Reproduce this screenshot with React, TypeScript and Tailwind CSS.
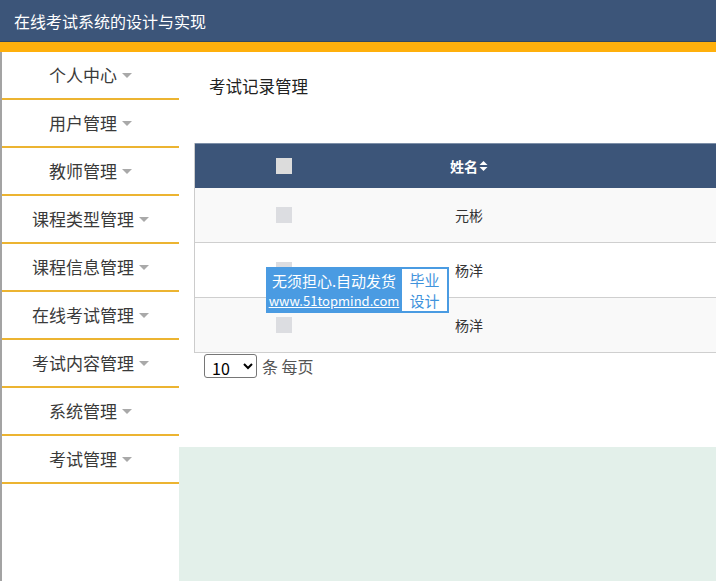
import React from 'react';

const menu = [
  '个人中心',
  '用户管理',
  '教师管理',
  '课程类型管理',
  '课程信息管理',
  '在线考试管理',
  '考试内容管理',
  '系统管理',
  '考试管理',
];

const rows = [
  { name: '元彬', bg: 'bg-[#f9f9f9]' },
  { name: '杨洋', bg: 'bg-white' },
  { name: '杨洋', bg: 'bg-[#f9f9f9]' },
];

function Caret() {
  return (
    <svg width="10" height="6" viewBox="0 0 10 6" className="ml-[5px] mt-[1px]">
      <path d="M0 0 L10 0 L5 5 Z" fill="#a9a9a9" />
    </svg>
  );
}

function SortIcon() {
  return (
    <svg width="9" height="12" viewBox="0 0 9 12" className="ml-[1px]">
      <path d="M0.5 5 L4.5 1 L8.5 5 Z" fill="#fff" />
      <path d="M0.5 7 L4.5 11 L8.5 7 Z" fill="#fff" />
    </svg>
  );
}

export default function App() {
  return (
    <div
      className="relative h-[581px] w-[716px] overflow-hidden bg-white text-[#333]"
      style={{ fontFamily: '"Noto Sans CJK SC", "Microsoft YaHei", sans-serif' }}
    >
      {/* top bar */}
      <div className="flex h-[42px] items-center bg-[#3c5579] pl-[14px] text-[16px] text-white border-b border-[#34475f]">
        在线考试系统的设计与实现
      </div>
      <div className="h-[10px] bg-[#ffb00c]" />

      <div className="flex h-[529px]">
        {/* sidebar */}
        <div className="w-[179px] shrink-0 border-l-2 border-[#a3a3a3] bg-white">
          {menu.map((m) => (
            <div
              key={m}
              className="flex h-[48px] items-center justify-center border-b-2 border-[#ecb431] text-[17px] text-[#3a3a3a]"
            >
              {m}
              <Caret />
            </div>
          ))}
        </div>

        {/* main */}
        <div className="flex flex-1 flex-col">
          <div className="h-[395px] bg-white px-[15px]">
            <div className="pl-[15px] pt-[23px] text-[16.5px] leading-[22px] text-[#222]">
              考试记录管理
            </div>
            <div className="mt-[46px] w-[700px] border-l border-[#ccc]">
              <div className="flex h-[45px] items-center bg-[#3c5579] border-t border-[#7d8fa8]">
                <div className="flex w-[178px] justify-center">
                  <div className="h-[16px] w-[16px] bg-[#dcdcdc]" />
                </div>
                <div className="flex w-[192px] items-center justify-center text-[14px] font-bold text-white">
                  姓名
                  <SortIcon />
                </div>
              </div>
              {rows.map((r, i) => (
                <div key={i} className={`flex h-[55px] items-center border-b border-[#cfcfcf] ${r.bg}`}>
                  <div className="flex w-[178px] justify-center">
                    <div className="h-[16px] w-[16px] bg-[#dcdde1]" />
                  </div>
                  <div className="flex w-[192px] justify-center text-[14px] text-[#333]">{r.name}</div>
                </div>
              ))}
            </div>
            <div className="mt-[1px] flex items-center pl-[10px] text-[16px] text-[#555]">
              <select className="h-[24px] w-[53px] rounded-[3px] border border-[#767676] bg-white pl-[3px] text-[16px] text-black">
                <option>10</option>
              </select>
              <span className="ml-[5px]">条 每页</span>
            </div>
          </div>
          <div className="flex-1 bg-[#e3f0ea]" />
        </div>
      </div>

      {/* watermark */}
      <div className="absolute left-[266px] top-[267px] flex h-[46px] w-[183px] items-center bg-[#4a9be2] pr-[2px]">
        <div className="flex w-[136px] flex-col items-center leading-none text-white">
          <span className="text-[15px]">无须担心.自动发货</span>
          <span className="mt-[6px] text-[13px] underline">www.51topmind.com</span>
        </div>
        <div className="flex h-[42px] flex-1 flex-col items-center justify-center bg-white text-[15px] text-[#3f93dc]">
          <span className="leading-[21px]">毕业</span>
          <span className="leading-[21px]">设计</span>
        </div>
      </div>
    </div>
  );
}
